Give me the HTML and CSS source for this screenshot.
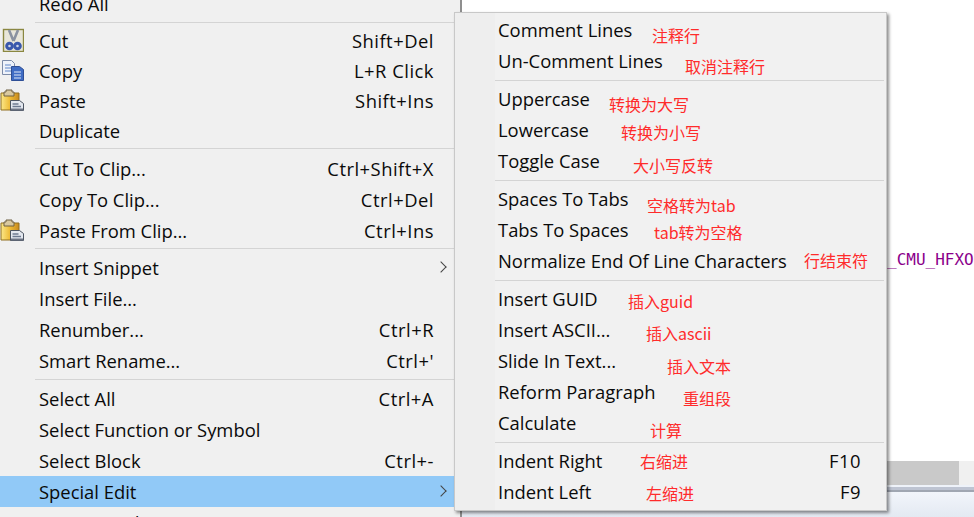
FILE: index.html
```html
<!DOCTYPE html>
<html lang="en">
<head>
    <meta charset="UTF-8">
    <title>Special Edit menu</title>
    <link rel="stylesheet" href="styles.css">
</head>
<body>

    <!-- editor behind the menus -->
    <div class="editor-code">_CMU_HFXO</div>
    <div class="scrollbar"><div class="scrollbar-thumb"></div></div>
    <div class="statusbar"></div>

    <!-- main context menu -->
    <div class="menu menu-main">
        <div class="row"><span>Redo All</span></div>
        <div class="sep"></div>
        <div class="row tight">
            <svg class="icon" viewBox="0 0 24 24">
                <rect x="3.5" y="1.5" width="20" height="22" fill="#e8e6da" stroke="#8a8740" stroke-width="1.4"/>
                <path d="M9 2l4.5 11M18 2l-4.5 11" stroke="#8a92a0" stroke-width="2.6" fill="none"/>
                <circle cx="9.5" cy="18" r="2.8" fill="#cfd6e6" stroke="#3a58ac" stroke-width="3"/>
                <circle cx="17.5" cy="18" r="2.8" fill="#cfd6e6" stroke="#3a58ac" stroke-width="3"/>
            </svg>
            <span>Cut</span><span class="key">Shift+Del</span>
        </div>
        <div class="row tight">
            <svg class="icon" viewBox="0 0 24 24">
                <path d="M2.5 2.5h9l3 3v11h-12z" fill="#eef2fa" stroke="#7c8ba8"/>
                <path d="M5 7h6M5 10h6M5 13h6" stroke="#5f86c8"/>
                <path d="M11.5 8.5h8l4 3v11h-12z" fill="#3f6cc4" stroke="#2f4f96"/>
                <path d="M14 14h7M14 17h7M14 20h7" stroke="#dfe8f8"/>
            </svg>
            <span>Copy</span><span class="key">L+R Click</span>
        </div>
        <div class="row tight">
            <svg class="icon" viewBox="0 0 24 24">
                <use href="#paste-icon"/>
            </svg>
            <span>Paste</span><span class="key">Shift+Ins</span>
        </div>
        <div class="row tight"><span>Duplicate</span></div>
        <div class="sep wide"></div>
        <div class="row"><span>Cut To Clip...</span><span class="key">Ctrl+Shift+X</span></div>
        <div class="row"><span>Copy To Clip...</span><span class="key">Ctrl+Del</span></div>
        <div class="row">
            <svg class="icon" viewBox="0 0 24 24">
                <use href="#paste-icon"/>
            </svg>
            <span>Paste From Clip...</span><span class="key">Ctrl+Ins</span>
        </div>
        <div class="sep"></div>
        <div class="row"><span>Insert Snippet</span><i class="arrow"></i></div>
        <div class="row"><span>Insert File...</span></div>
        <div class="row"><span>Renumber...</span><span class="key">Ctrl+R</span></div>
        <div class="row"><span>Smart Rename...</span><span class="key">Ctrl+'</span></div>
        <div class="sep wide"></div>
        <div class="row"><span>Select All</span><span class="key">Ctrl+A</span></div>
        <div class="row"><span>Select Function or Symbol</span></div>
        <div class="row"><span>Select Block</span><span class="key">Ctrl+-</span></div>
        <div class="row active"><span>Special Edit</span><i class="arrow"></i></div>
        <div class="row"><span>Format Code</span></div>
    </div>

    <!-- Special Edit submenu -->
    <div class="menu menu-sub">
        <div class="row"><span>Comment Lines</span></div>
        <div class="row"><span>Un-Comment Lines</span></div>
        <div class="sep"></div>
        <div class="row"><span>Uppercase</span></div>
        <div class="row"><span>Lowercase</span></div>
        <div class="row"><span>Toggle Case</span></div>
        <div class="sep"></div>
        <div class="row"><span>Spaces To Tabs</span></div>
        <div class="row"><span>Tabs To Spaces</span></div>
        <div class="row"><span>Normalize End Of Line Characters</span></div>
        <div class="sep"></div>
        <div class="row"><span>Insert GUID</span></div>
        <div class="row"><span>Insert ASCII...</span></div>
        <div class="row"><span>Slide In Text...</span></div>
        <div class="row"><span>Reform Paragraph</span></div>
        <div class="row"><span>Calculate</span></div>
        <div class="sep"></div>
        <div class="row"><span>Indent Right</span><span class="key">F10</span></div>
        <div class="row"><span>Indent Left</span><span class="key">F9</span></div>
    </div>

    <!-- red hand-written notes on top of the screenshot -->
    <span class="note n1">注释行</span>
    <span class="note n2">取消注释行</span>
    <span class="note n3">转换为大写</span>
    <span class="note n4">转换为小写</span>
    <span class="note n5">大小写反转</span>
    <span class="note n6">空格转为tab</span>
    <span class="note n7">tab转为空格</span>
    <span class="note n8">行结束符</span>
    <span class="note n9">插入guid</span>
    <span class="note n10">插入ascii</span>
    <span class="note n11">插入文本</span>
    <span class="note n12">重组段</span>
    <span class="note n13">计算</span>
    <span class="note n14">右缩进</span>
    <span class="note n15">左缩进</span>

    <svg class="defs" width="0" height="0">
        <defs>
            <linearGradient id="paste-gold" x1="0" x2="1" y1="0" y2="0">
                <stop offset="0" stop-color="#fbe88a"/>
                <stop offset="0.5" stop-color="#eebb35"/>
                <stop offset="1" stop-color="#c98a1c"/>
            </linearGradient>
            <g id="paste-icon">
                <path d="M1 5h18v17H1z" fill="url(#paste-gold)" stroke="#8f6f20"/>
                <path d="M6 2h6v2h2v4H4V4h2z" fill="#d9c9a0" stroke="#6f6042"/>
                <path d="M10.5 12.5h9l4 3v7h-13z" fill="#e4e8ef" stroke="#4d5562"/>
                <path d="M12.5 16h6M12.5 18.5h8.5" stroke="#6d7a90" stroke-width="1.4"/>
                <path d="M11 20.5h12v2H11z" fill="#6d7484"/>
            </g>
        </defs>
    </svg>

</body>
</html>
```

FILE: styles.css
```css
body {
  margin: 0;
  height: 517px;
  position: relative;
  overflow: hidden;
  background-color: #ffffff;
  font-family: "Open Sans", "Noto Sans CJK SC", sans-serif;
  color: #0a0a0a;
}
.defs {
  position: absolute;
}

/* editor behind the menus */
.editor-code {
  position: absolute;
  left: 887px;
  top: 250px;
  font-family: "DejaVu Sans Mono", monospace;
  font-size: 16px;
  line-height: 20px;
  color: #8b008b;
}
.scrollbar {
  position: absolute;
  left: 460px;
  right: 0;
  top: 461px;
  height: 24px;
  background-color: #f0f0f0;
}
.scrollbar-thumb {
  width: 499px;
  height: 100%;
  background-color: #c9c9c9;
}
.statusbar {
  position: absolute;
  left: 460px;
  right: 0;
  top: 485px;
  bottom: 0;
  background: linear-gradient(#eef2f9 2px, #bec4d2 2px, #bec4d2 5px, #a0a6b2 5px, #a0a6b2 7px, #f2f5fb 7px, #e3e9f2);
}

/* menus */
.menu {
  position: absolute;
  box-sizing: border-box;
  font-size: 18.4px;
}
.menu-main {
  left: 0;
  top: -12px;
  width: 462px;
  height: 540px;
  background-color: #f0f0f0;
  border-right: 2px solid #8f8f8f;
}
.menu-main .sep {
  height: 6px;
}
.menu-main .sep.wide {
  height: 7.5px;
}
.menu-sub {
  left: 454px;
  top: 12px;
  width: 433px;
  height: 499px;
  padding-top: 1.5px;
  background: linear-gradient(to right, #eeeeee 40px, #f1f1f1 40px);
  border: 1px solid #c8c8c8;
  box-shadow: 2px 2px 3px rgba(0, 0, 0, 0.45);
}
.row {
  position: relative;
  display: flex;
  align-items: center;
  justify-content: space-between;
  height: 31px;
  padding-left: 39px;
  padding-right: 26px;
  white-space: nowrap;
}
.menu-main .row.tight {
  height: 30px;
}
.menu-sub .row {
  box-sizing: border-box;
  padding-left: 43px;
  padding-right: 25px;
  padding-bottom: 2px;
}
.key {
  letter-spacing: 0.5px;
}
.row.active {
  background-color: #91c9f7;
}
.sep {
  height: 7px;
  margin-left: 35px;
  display: flex;
  align-items: center;
}
.sep::before {
  content: "";
  flex: 1;
  height: 1px;
  background-color: #d4d4d4;
}
.menu-sub .sep {
  margin-left: 40px;
  margin-right: 2px;
}
.icon {
  position: absolute;
  left: 0;
  top: 3px;
  width: 24px;
  height: 24px;
}
.arrow {
  position: absolute;
  left: 437px;
  top: 11px;
  width: 7px;
  height: 7px;
  border-top: 1px solid #444444;
  border-right: 1px solid #444444;
  transform: rotate(45deg);
}

/* notes */
.note {
  position: absolute;
  font-family: "Noto Sans CJK SC", sans-serif;
  font-size: 16px;
  line-height: 20px;
  color: #ff2b2b;
  white-space: nowrap;
}
.n1 { left: 652px; top: 25px; }
.n2 { left: 685px; top: 56px; }
.n3 { left: 609px; top: 94px; }
.n4 { left: 621px; top: 122px; }
.n5 { left: 633px; top: 155px; }
.n6 { left: 647px; top: 195px; }
.n7 { left: 654px; top: 222px; }
.n8 { left: 804px; top: 250px; }
.n9 { left: 628px; top: 291px; }
.n10 { left: 646px; top: 323px; }
.n11 { left: 667px; top: 356px; }
.n12 { left: 683px; top: 388px; }
.n13 { left: 650px; top: 420px; }
.n14 { left: 640px; top: 451px; }
.n15 { left: 646px; top: 483px; }
```
